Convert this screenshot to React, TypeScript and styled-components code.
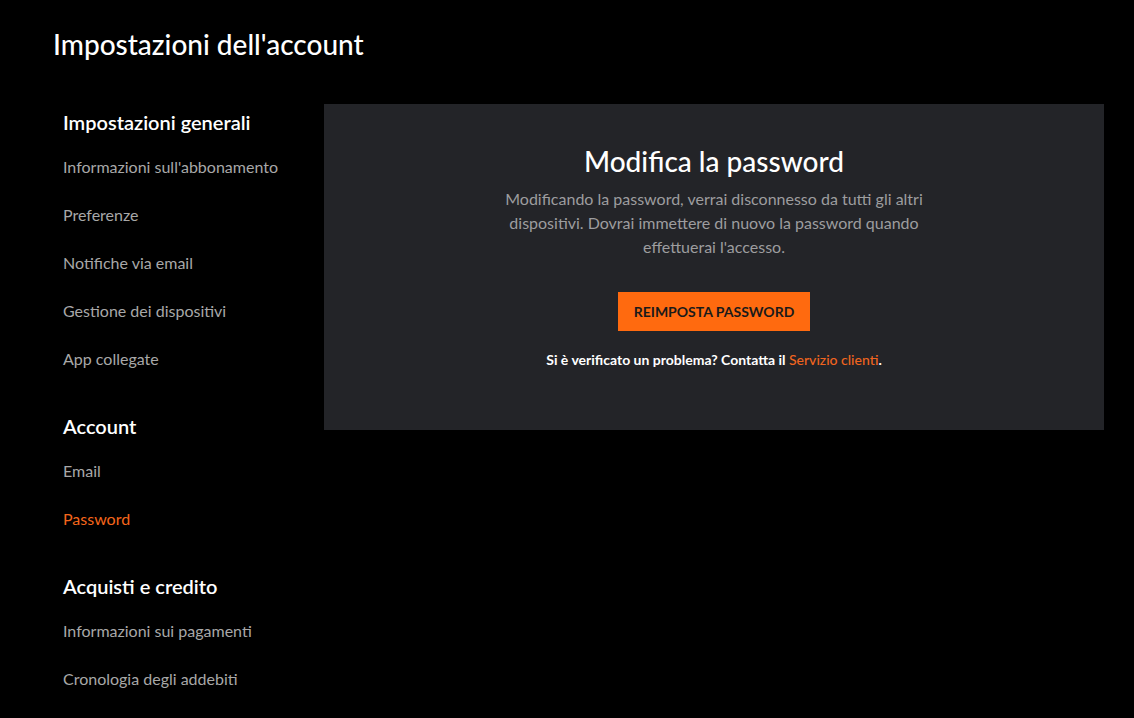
import React from 'react';
import styled, { createGlobalStyle } from 'styled-components';

const GlobalStyle = createGlobalStyle`
  body {
    margin: 0;
    background: #000;
    font-family: Lato, "Open Sans", sans-serif;
    -webkit-font-smoothing: antialiased;
  }
`;

const Page = styled.div`
  box-sizing: border-box;
  width: 1134px;
  min-height: 718px;
  padding: 27px 30px 0 53px;
  background: #000;
  color: #fff;
`;

const PageTitle = styled.h1`
  margin: 0;
  font-size: 28px;
  line-height: 34px;
  font-weight: 500;
  color: #fff;
`;

const Body = styled.div`
  display: flex;
  align-items: flex-start;
  margin-top: 43px;
`;

const Sidebar = styled.nav`
  display: flex;
  flex-direction: column;
  gap: 31px;
  width: 271px;
  padding: 6px 0 0 10px;
  box-sizing: border-box;
`;

const Section = styled.div`
  display: flex;
  flex-direction: column;
`;

const SectionTitle = styled.h2`
  margin: 0 0 9px;
  font-size: 20px;
  line-height: 24px;
  font-weight: 600;
  color: #fff;
`;

const NavItem = styled.a<{ $active?: boolean }>`
  display: block;
  font-size: 16px;
  line-height: 48px;
  color: ${(p) => (p.$active ? '#f5661b' : '#a8a8a8')};
  text-decoration: none;
  cursor: pointer;
`;

const Panel = styled.section`
  display: flex;
  flex-direction: column;
  align-items: center;
  width: 780px;
  padding: 40px 0 60px;
  box-sizing: border-box;
  background: #232428;
  text-align: center;
`;

const PanelTitle = styled.h2`
  margin: 0;
  font-size: 28px;
  line-height: 34px;
  font-weight: 500;
  color: #fff;
`;

const Description = styled.p`
  max-width: 432px;
  margin: 9px 0 0;
  font-size: 16px;
  line-height: 24px;
  color: #9d9d9f;
`;

const ResetButton = styled.button`
  height: 39px;
  margin-top: 33px;
  padding: 0 16px;
  border: none;
  background: #ff6a0f;
  color: #1a1a1a;
  font-family: inherit;
  font-size: 14px;
  font-weight: 700;
  cursor: pointer;
`;

const HelpText = styled.p`
  margin: 19px 0 0;
  font-size: 14px;
  line-height: 20px;
  font-weight: 700;
  color: #fff;
`;

const HelpLink = styled.a`
  color: #f0641f;
  font-weight: 500;
  text-decoration: none;
`;

const sections = [
  {
    title: 'Impostazioni generali',
    items: [
      "Informazioni sull'abbonamento",
      'Preferenze',
      'Notifiche via email',
      'Gestione dei dispositivi',
      'App collegate',
    ],
  },
  { title: 'Account', items: ['Email', 'Password'] },
  {
    title: 'Acquisti e credito',
    items: ['Informazioni sui pagamenti', 'Cronologia degli addebiti'],
  },
];

export default function App(): JSX.Element {
  return (
    <>
      <GlobalStyle />
      <Page>
        <PageTitle>Impostazioni dell'account</PageTitle>
        <Body>
          <Sidebar>
            {sections.map((s) => (
              <Section key={s.title}>
                <SectionTitle>{s.title}</SectionTitle>
                {s.items.map((item) => (
                  <NavItem key={item} $active={item === 'Password'}>
                    {item}
                  </NavItem>
                ))}
              </Section>
            ))}
          </Sidebar>
          <Panel>
            <PanelTitle>Modifica la password</PanelTitle>
            <Description>
              Modificando la password, verrai disconnesso da tutti gli altri
              dispositivi. Dovrai immettere di nuovo la password quando
              effettuerai l'accesso.
            </Description>
            <ResetButton>REIMPOSTA PASSWORD</ResetButton>
            <HelpText>
              Si è verificato un problema? Contatta il{' '}
              <HelpLink>Servizio clienti</HelpLink>.
            </HelpText>
          </Panel>
        </Body>
      </Page>
    </>
  );
}
